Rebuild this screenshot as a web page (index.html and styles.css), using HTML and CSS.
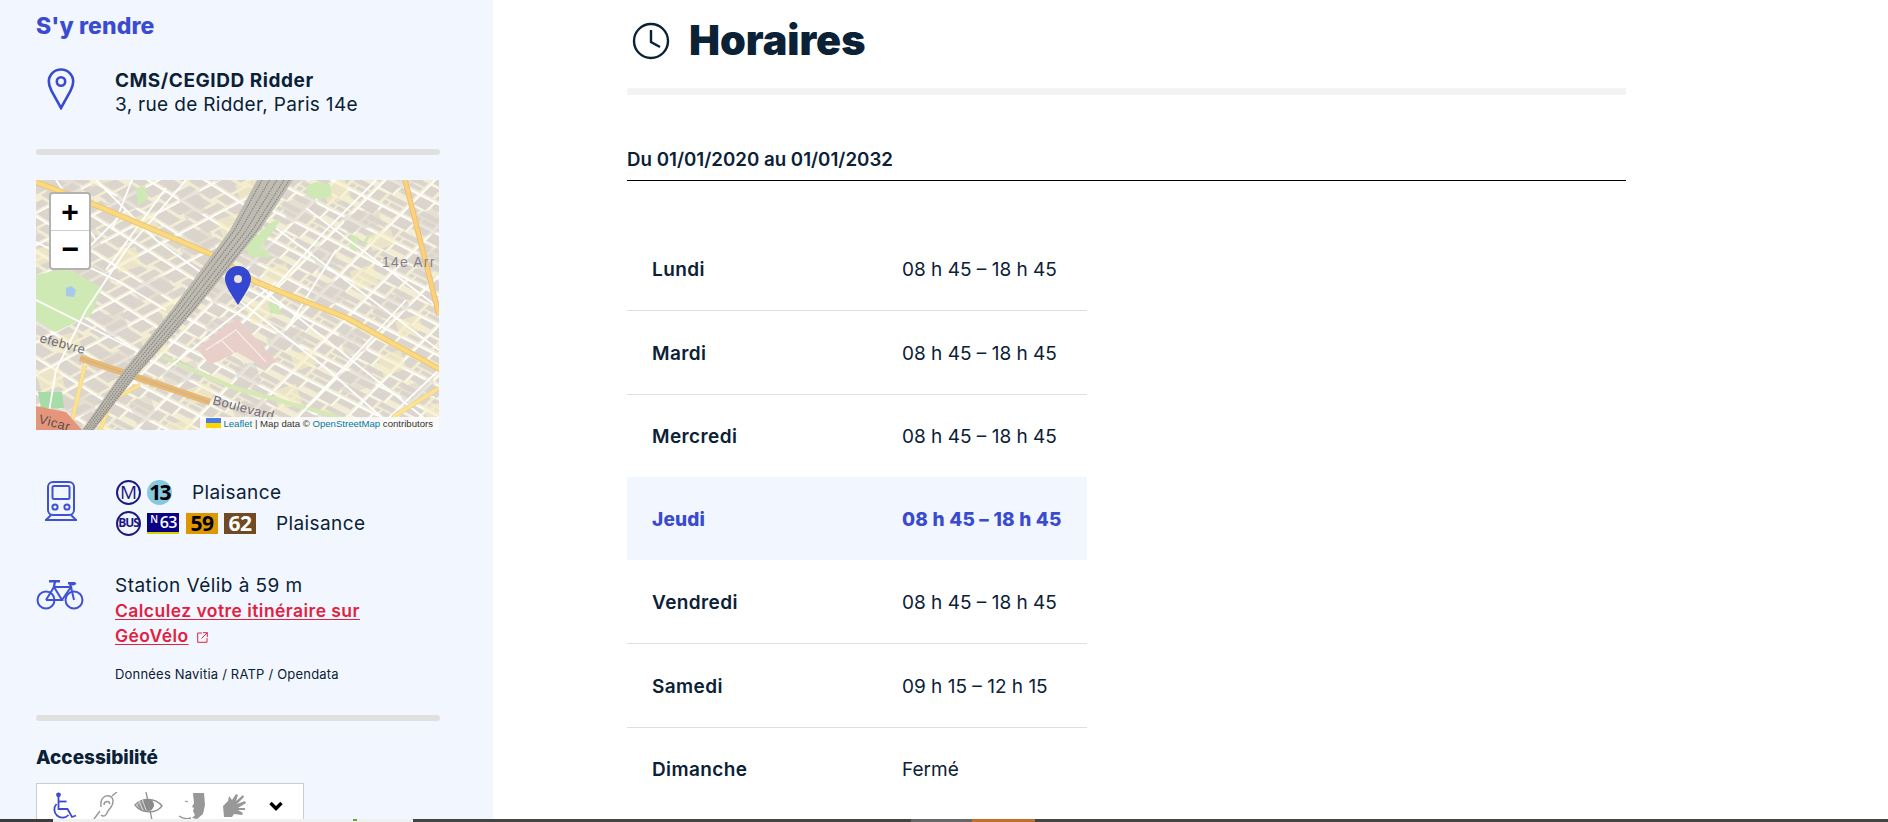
FILE: index.html
```html
<!DOCTYPE html>
<html lang="fr">
<head>
    <meta charset="UTF-8">
    <title>Horaires</title>
    <link rel="stylesheet" href="styles.css">
</head>
<body>
<div class="page">
    <aside class="side">
        <h2 class="side-title">S'y rendre</h2>
        <div class="row row-addr">
            <svg class="ico-pin" width="28" height="42" viewBox="0 0 28 42"><path d="M14 1.500C7 1.500 1.800 7 1.800 13.600c0 3.400 1 6 2.600 9L14 40l9.600-17.400c1.600-3 2.600-5.600 2.600-9C26.200 7 21 1.500 14 1.500z" fill="none" stroke="#3a4bd0" stroke-width="2.600"/><circle cx="14" cy="13.500" r="4.200" fill="none" stroke="#3a4bd0" stroke-width="2.600"/></svg>
            <div class="addr">
                <b>CMS/CEGIDD Ridder</b>
                <span>3, rue de Ridder, Paris 14e</span>
            </div>
        </div>
        <hr class="sep">

        <div class="map">
            <svg class="map-bg" width="403" height="250" viewBox="0 0 403 250">
                <defs>
                    <pattern id="blocksR" width="37" height="27" patternUnits="userSpaceOnUse" patternTransform="rotate(27) skewX(-18)">
                        <rect width="37" height="27" fill="#f2eed6"/>
                        <path d="M2 2h14v10H2zM19 2h16v6H19zM2 15h10v10H2zM15 14h20v5H15zM22 21h13v4H22zM15 21h5v4h-5z" fill="#dbd5cd"/>
                        <path d="M0 .8h37M.8 0v27" stroke="#fff" stroke-width="1.900"/>
                        <path d="M0 13h14M17.500 0v13" stroke="#fff" stroke-width=".9"/>
                    </pattern>
                    <pattern id="blocksL" width="33" height="30" patternUnits="userSpaceOnUse" patternTransform="rotate(32) skewX(-30)">
                        <rect width="33" height="30" fill="#f2eed6"/>
                        <path d="M2 2h13v12H2zM18 2h13v8H18zM2 17h18v11H2zM23 13h8v15h-8z" fill="#dbd5cd"/>
                        <path d="M0 .8h33M.8 0v30" stroke="#fff" stroke-width="1.900"/>
                    </pattern>
                    <pattern id="patches" width="110" height="90" patternUnits="userSpaceOnUse" patternTransform="rotate(-18)">
                        <path d="M6 8h34v22H6zM60 40h36v18H60zM20 60h22v24H20z" fill="#d9d3cb" opacity=".55"/>
                        <path d="M50 4h24v20H50zM78 66h24v16H78z" fill="#f6efc4" opacity=".6"/>
                    </pattern>
                </defs>
                <rect width="403" height="250" fill="url(#blocksR)"/>
                <path d="M0 0H235L50 250H0z" fill="url(#blocksL)"/>
                <rect width="403" height="250" fill="url(#patches)"/>
                <g fill="#cfe9b4">
                    <path d="M0 95l30-7 36 20-11 27-35 17-20-12z"/>
                    <path d="M100 8l9-2 3 12-10 8zM270 6l10-4 14 2 2 12-12 4-12-4zM315 54l8 4-3 14-6-4zM328 60l8-8-8 16z"/>
                    <path d="M206 68l30-26 10-4-20 28-6 8zM212 68l20 2 2 8-22-2z"/>
                    <path d="M232 122l10 3 4 10-12-2z"/>
                </g>
                <path d="M127 175l70 30 130 37v4l-130-36-72-32z" fill="#d6e8b6"/>
                <path d="M2 212h24l2 16H5z" fill="#a6dca6"/>
                <path d="M30 108l5-2 5 4-2 7-8-1z" fill="#a9c8ee"/>
                <path d="M161 168l40-30 40 44-14 5-26-15-27 13z" fill="#e9cfca"/>
                <path d="M170 170l30-20 30 32M185 160l24 24M200 150l-20 14" fill="none" stroke="#f6eeea" stroke-width="1.200"/>
                <g stroke="#fff" stroke-width="1.800" fill="none">
                    <path d="M-5 60L80 100 130 130M60 0l60 60 50 36M0 120l60 30 50 26M20 0l40 60M96 0l-20 50"/>
                    <path d="M150 0l-60 70-40 60-30 60-10 60M130 8L70 90M90 30l-60 60"/>
                    <path d="M200 118l90 70 70 62M218 102l100 80 85 68M240 48l80 60 83 62M270 28l80 60 53 40"/>
                    <path d="M210 140l80-90 50-50M250 250l120-130M340 250l63-60M130 190l60-48 50-40M300 70l-50 80"/>
                </g>
                <g fill="none">
                    <path d="M-5 0L64 27 177 75 220 102 311 138 405 190" stroke="#e9c87e" stroke-width="6"/>
                    <path d="M-5 0L64 27 177 75 220 102 311 138 405 190" stroke="#fbd97c" stroke-width="3.800"/>
                    <path d="M369 0L403 135" stroke="#e8c07c" stroke-width="5.500"/>
                    <path d="M369 0L403 135" stroke="#fdd07a" stroke-width="3.500"/>
                    <path d="M49 185L34 250M104 205L76 220 64 250M403 208L357 237" stroke="#f0d68c" stroke-width="4.500"/>
                    <path d="M49 185L34 250M104 205L76 220 64 250M403 208L357 237" stroke="#fbe394" stroke-width="2.800"/>
                    <path d="M44 178L174 222" stroke="#e9b872" stroke-width="7"/>
                    <path d="M44 178L174 222" stroke="#c9b48c" stroke-width="1.200"/>
                </g>
                <path d="M221 0H257L224 50 161 128 101 195 58 250H46L84 195 137 128 194 50z" fill="#bdbbb2"/>
                <g fill="none" stroke="#86847e" stroke-width="1.100" stroke-dasharray="1.500 1">
                    <path d="M226 0L198.500 50 140.600 128 86.500 195 47.800 250"/>
                    <path d="M233.600 0L204.500 50 145.400 128 90 195 50.200 250"/>
                    <path d="M240.800 0L210.500 50 150.200 128 93.400 195 52.600 250"/>
                    <path d="M248 0L216.500 50 155 128 96.800 195 55 250"/>
                    <path d="M253.400 0L221 50 158.600 128 99.300 195 56.800 250"/>
                </g>
                <path d="M0 226l30 6 16 18H0z" fill="#e5967a"/>
                <text class="map-lbl lbl-big" x="346" y="87">14e Arr</text>
                <text class="map-lbl" x="3" y="162" transform="rotate(15 3 162)">efebvre</text>
                <text class="map-lbl" x="176" y="224" transform="rotate(15 176 224)">Boulevard</text>
                <text class="map-lbl lbl-dark" x="2" y="243" transform="rotate(15 2 243)">Vicar</text>
            </svg>
            <div class="zoom">
                <a class="zoom-btn">+</a>
                <a class="zoom-btn">&#8722;</a>
            </div>
            <svg class="marker" width="26" height="40" viewBox="0 0 26 40"><path d="M13 0C5.800 0 0 5.800 0 13c0 7 7 16 13 26 6-10 13-19 13-26C26 5.800 20.200 0 13 0z" fill="#3347d1"/><circle cx="13" cy="13" r="4" fill="#e8e4da"/></svg>
            <div class="attrib">
                <svg width="15" height="10" viewBox="0 0 15 10"><rect width="15" height="5" fill="#4c7be1"/><rect y="5" width="15" height="5" fill="#ffd500"/></svg>
                <a>Leaflet</a> | Map data &copy; <a>OpenStreetMap</a> contributors
            </div>
        </div>

        <div class="row row-transit">
            <svg class="ico-train" width="34" height="42" viewBox="0 0 34 42"><g fill="none" stroke="#3f52d6" stroke-width="2"><rect x="4" y="2" width="26" height="33" rx="5"/><rect x="8.500" y="6" width="17" height="13" rx="1.500"/><circle cx="11" cy="27" r="2.600"/><circle cx="23" cy="27" r="2.600"/><path d="M7 35l-5 5M27 35l5 5M1 40h32"/></g></svg>
            <div class="lines">
                <div class="line-row">
                    <span class="mode">M</span>
                    <span class="num-metro">13</span>
                    <span class="stop">Plaisance</span>
                </div>
                <div class="line-row">
                    <span class="mode mode-bus">BUS</span>
                    <span class="num-n"><sup>N</sup>63</span>
                    <span class="num-bus c59">59</span>
                    <span class="num-bus c62">62</span>
                    <span class="stop">Plaisance</span>
                </div>
            </div>
        </div>

        <div class="row row-velo">
            <svg class="ico-bike" width="48" height="32" viewBox="0 0 48 32"><g fill="none" stroke="#3f52d6" stroke-width="2"><circle cx="10" cy="21" r="8.500"/><circle cx="38" cy="21" r="8.500"/><path d="M10 21l8-13h17l3 13M18 8l8 13H10M26 21L35 8"/></g><path d="M13 1h11v2.500h-4l-1 5h-2.400l1-5H13zM32 3h7l1.500 2-3 1.500h-2l1 3h-2.400l-1-4H32z" fill="#3f52d6"/></svg>
            <div class="velo">
                <div class="velo-txt">Station Vélib à 59 m</div>
                <div class="velo-go"><a class="velo-link">Calculez votre itinéraire sur GéoVélo</a><svg class="ico-ext" width="11" height="11" viewBox="0 0 11 11"><path d="M5 1H.7v9.300H10V6M6 .7h4.300V5M10.300.7L4.500 6.500" fill="none" stroke="#e1223f" stroke-width="1"/></svg></div>
                <div class="source">Données Navitia / RATP / Opendata</div>
            </div>
        </div>
        <hr class="sep">

        <h3 class="access-title">Accessibilité</h3>
        <div class="access">
            <svg width="26" height="28" viewBox="0 0 26 28"><g fill="none" stroke="#3a4bd0" stroke-width="1.800"><path d="M6.500 3v14h9l4.500 8 4-1.500"/><path d="M6.500 9.500h8"/><path d="M4.500 12a7.800 7.800 0 1 0 12 11"/></g><circle cx="6.500" cy="2.800" r="2.400" fill="#3a4bd0"/></svg>
            <svg width="26" height="28" viewBox="0 0 26 28"><g fill="none" stroke="#9a9a9a" stroke-width="1.500"><path d="M8 15c-1-8 3-12 8-11 5 1 5 7 2 11-2 3-3 3-4 6s-4 4-6 2"/><path d="M11 13c0-4 5-5 6-1"/><path d="M1 27L7 19M19 4l5-4"/></g></svg>
            <svg width="30" height="28" viewBox="0 0 30 28"><path d="M1 13c6-7 20-8 27 1-6 8-20 8-27-1z" fill="none" stroke="#8f8f8f" stroke-width="1.300"/><path d="M3 13c3-4 6-5 9-6v13c-4-1-7-3-9-7z" fill="#9a9a9a"/><circle cx="14" cy="13" r="6" fill="#8a8a8a"/><path d="M12 0l6 28" stroke="#8f8f8f" stroke-width="1.300"/><path d="M5 9l4 9M8 7l4 11" stroke="#f2f2f2" stroke-width=".8"/></svg>
            <svg width="28" height="28" viewBox="0 0 28 28"><path d="M14 1h11l1 12-2 9-6 5-5-1 3-3-2-4 1-3-2-1 2-4z" fill="#989898"/><path d="M0 24c4 3 8 3 12 2M6 9l3 1" fill="none" stroke="#989898" stroke-width="1.300"/></svg>
            <svg width="26" height="28" viewBox="0 0 26 28"><path d="M2 25l-1-11 5-5 1-5 3 4 4-6 2 1-2 6 7-6 1 2-7 7 8-3 1 2-8 5 7 0v2h-7l5 3-1 2-8-1-2 3z" fill="#989898"/></svg>
            <svg class="ico-chev" width="14" height="10" viewBox="0 0 14 10"><path d="M1.500 2L7 7.500 12.500 2" fill="none" stroke="#000" stroke-width="3.400"/></svg>
        </div>
    </aside>

    <main class="main">
        <div class="head">
            <svg width="38" height="38" viewBox="0 0 38 38"><circle cx="19" cy="19" r="17" fill="none" stroke="#0b2136" stroke-width="2.400"/><path d="M19 8v12l9 5" fill="none" stroke="#0b2136" stroke-width="2.400"/></svg>
            <h1>Horaires</h1>
        </div>
        <div class="period">Du 01/01/2020 au 01/01/2032</div>
        <table class="hours">
            <tr><th>Lundi</th><td>08 h 45 – 18 h 45</td></tr>
            <tr><th>Mardi</th><td>08 h 45 – 18 h 45</td></tr>
            <tr><th>Mercredi</th><td>08 h 45 – 18 h 45</td></tr>
            <tr class="today"><th>Jeudi</th><td>08 h 45 – 18 h 45</td></tr>
            <tr><th>Vendredi</th><td>08 h 45 – 18 h 45</td></tr>
            <tr><th>Samedi</th><td>09 h 15 – 12 h 15</td></tr>
            <tr><th>Dimanche</th><td>Fermé</td></tr>
        </table>
    </main>
</div>
<div class="taskbar">
    <i class="tb tb-a"></i><i class="tb tb-b"></i><i class="tb tb-c"></i><i class="tb tb-d"></i><i class="tb tb-e"></i><i class="tb tb-f"></i>
</div>
</body>
</html>
```

FILE: styles.css
```css
html,body{margin:0;padding:0;height:100%;overflow:hidden;}
body{font-family:"Inter","Liberation Sans",sans-serif;color:#0b2136;background:#fff;display:flex;flex-direction:column;}
.page{flex:1;display:flex;min-height:0;overflow:hidden;}
.side{width:404px;flex:none;padding:0 53px 0 36px;background:#f2f7ff;overflow:hidden;}
.side-title{margin:13px 0 0;font-size:23px;line-height:26px;font-weight:800;letter-spacing:.1px;color:#3a4bd0;}
.row{display:flex;}
.row-addr{margin-top:29px;padding-left:11px;}
.ico-pin{flex:none;margin-right:40px;}
.addr{font-size:19px;line-height:24px;padding-top:1px;letter-spacing:.32px;}
.addr b{display:block;font-weight:700;letter-spacing:.55px;}
.addr span{display:block;}
.sep{border:0;height:6px;border-radius:3px;background:#e0e0e0;margin:0;}
.row-addr + .sep{margin-top:32px;}
.map{position:relative;width:403px;height:250px;margin-top:25px;overflow:hidden;}
.map-bg{display:block;}
.map-lbl{font-family:"Liberation Sans",sans-serif;font-size:13px;letter-spacing:.5px;fill:#6f6c74;}
.lbl-big{font-size:14px;letter-spacing:1.200px;fill:#85818a;}
.lbl-dark{fill:#5a4f50;}
.zoom{position:absolute;left:13px;top:12px;width:38px;border:2px solid rgba(0,0,0,.3);border-radius:4px;background:#fff;}
.zoom-btn{display:block;height:36px;overflow:hidden;text-align:center;font:700 30px/41px "Liberation Mono",monospace;color:#000;}
.zoom-btn + .zoom-btn{height:37px;border-top:1px solid #ccc;}
.marker{position:absolute;left:189px;top:86px;}
.attrib{position:absolute;right:0;bottom:0;padding:0 6px;height:13px;font:9.600px/13px "Liberation Sans",sans-serif;color:#333;background:rgba(255,255,255,.8);white-space:nowrap;}
.attrib svg{vertical-align:-1px;}
.attrib a{color:#0078a8;}
.row-transit{margin-top:47px;padding-left:8px;}
.ico-train{flex:none;margin-right:38px;margin-top:3px;}
.line-row{display:flex;align-items:center;height:31px;}
.mode{box-sizing:border-box;width:25px;height:25px;border:2.500px solid #1c1884;border-radius:50%;color:#1c1884;font:500 19px/20px "Open Sans",sans-serif;text-align:center;}
.mode-bus{font:700 12px/20px "Open Sans",sans-serif;letter-spacing:-1px;}
.num-metro{width:25px;height:25px;margin-left:6px;border-radius:50%;background:#85c8e0;color:#000;font:700 21px/25px "Open Sans",sans-serif;letter-spacing:-1.800px;text-align:center;}
.num-n{box-sizing:border-box;width:32px;height:21px;margin-left:6px;background:#0a0084;border-bottom:2px solid #d8d300;color:#fff;font:600 16px/19px "Open Sans",sans-serif;letter-spacing:-.5px;text-align:right;padding-right:2px;}
.num-n sup{font-size:10px;line-height:0;vertical-align:5px;margin-right:2px;}
.num-bus{width:32px;height:21px;font:700 21px/21px "Open Sans",sans-serif;letter-spacing:-.5px;text-align:center;}
.c59{margin-left:7px;background:#df9700;color:#000;}
.c62{margin-left:6px;background:#6f4a22;color:#fff;}
.stop{margin-left:20px;font-size:19px;letter-spacing:.4px;}
.row-velo{margin-top:35px;}
.ico-bike{flex:none;margin-right:31px;margin-top:5px;}
.velo{width:260px;}
.velo-txt{font-size:19px;line-height:24px;letter-spacing:.45px;}
.velo-go{font-size:17.500px;line-height:25px;}
.velo-link{font-weight:600;letter-spacing:.45px;color:#e1223f;text-decoration:underline;text-underline-offset:2px;}
.ico-ext{margin-left:8px;vertical-align:-1px;}
.source{margin-top:16px;margin-bottom:31px;font-size:13px;line-height:20px;letter-spacing:.2px;}
.access-title{margin:25px 0 0;font-size:19px;line-height:24px;font-weight:800;}
.access{box-sizing:border-box;width:268px;height:60px;margin-top:13px;padding:8px 0 0 15px;border:1px solid #ccc;background:#fff;display:flex;gap:15px;align-items:flex-start;}
.ico-chev{margin:9px 0 0 6px;}
.main{flex:1;min-width:0;padding:0 262px 0 134px;}
.head{display:flex;align-items:center;gap:19px;height:82px;padding-bottom:6px;border-bottom:7px solid #f3f3f3;padding-left:5px;}
.head h1{margin:0;font-size:41.300px;line-height:78px;font-weight:900;position:relative;top:-1px;}
.period{line-height:24px;padding:53px 0 8px;font-size:18.700px;font-weight:600;border-bottom:1px solid #000;}
.hours{width:460px;margin-top:46px;border-collapse:collapse;font-size:19px;}
.hours tr{height:83px;border-top:1px solid #dcdfe4;}
.hours tr:nth-child(2),.hours tr:nth-child(6){height:84px;}
.hours tr:first-child,.hours tr.today,.hours tr.today + tr{border-top:0;}
.hours th{width:250px;padding:2px 0 0 25px;text-align:left;font-weight:600;letter-spacing:.4px;}
.hours td{padding:2px 0 0;white-space:nowrap;}
.today{background:#f2f7ff;color:#3a4bd0;}
.today th,.today td{font-weight:800;letter-spacing:.2px;}
.taskbar{flex:none;height:3px;display:flex;background:#444;}
.tb{display:block;height:3px;}
.tb-a{width:53px;background:#3c3c3c;}
.tb-b{width:360px;background:#f0f0f0 linear-gradient(#6a3,#6a3) no-repeat 300px 0/4px 2px;}
.tb-c{width:498px;background:#444542;}
.tb-d{width:61px;background:#666;}
.tb-e{width:63px;background:#c0702c;}
.tb-f{flex:1;background:#444542;}
```
